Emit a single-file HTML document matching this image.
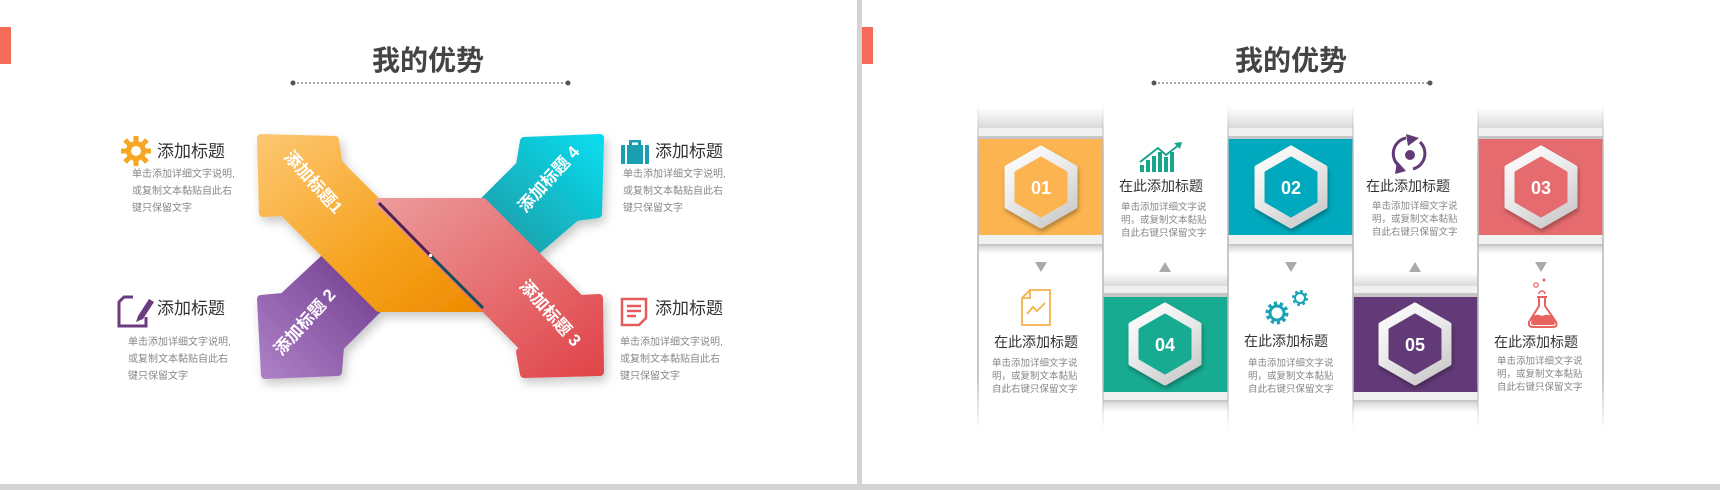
<!DOCTYPE html>
<html><head><meta charset="utf-8">
<style>
html,body{margin:0;padding:0;background:#fff;}
svg{display:block;}
text{font-family:"Liberation Sans","Noto Sans CJK SC",sans-serif;}
</style></head>
<body>
<svg width="1720" height="490" viewBox="0 0 1720 490" xmlns="http://www.w3.org/2000/svg">
<defs>
<linearGradient id="gO" x1="0" y1="0" x2="1" y2="1"><stop offset="0" stop-color="#fdc670"/><stop offset="0.6" stop-color="#f6a21d"/><stop offset="1" stop-color="#ee8c00"/></linearGradient>
<linearGradient id="gP" x1="1" y1="0" x2="0" y2="1"><stop offset="0" stop-color="#6e3a8c"/><stop offset="1" stop-color="#ad80c6"/></linearGradient>
<linearGradient id="gT" x1="0" y1="1" x2="1" y2="0"><stop offset="0" stop-color="#23939e"/><stop offset="1" stop-color="#06dcee"/></linearGradient>
<linearGradient id="gR" x1="0" y1="0" x2="1" y2="1"><stop offset="0" stop-color="#ec9a9a"/><stop offset="1" stop-color="#e04449"/></linearGradient>
<linearGradient id="shT" x1="0" y1="0" x2="0" y2="1"><stop offset="0" stop-color="#fff"/><stop offset="1" stop-color="#dadada"/></linearGradient>
<linearGradient id="shB" x1="0" y1="0" x2="0" y2="1"><stop offset="0" stop-color="#d8d8d8"/><stop offset="1" stop-color="#fff"/></linearGradient>
<linearGradient id="vE" x1="0" y1="0" x2="0" y2="1"><stop offset="0" stop-color="#bbb" stop-opacity="0"/><stop offset="0.15" stop-color="#bbb" stop-opacity="0.8"/><stop offset="0.85" stop-color="#bbb" stop-opacity="0.8"/><stop offset="1" stop-color="#bbb" stop-opacity="0"/></linearGradient>
<linearGradient id="ring" x1="0" y1="0" x2="0.6" y2="1"><stop offset="0" stop-color="#ffffff"/><stop offset="0.5" stop-color="#ececec"/><stop offset="1" stop-color="#cfcfcf"/></linearGradient>
<filter id="ds" x="-30%" y="-30%" width="160%" height="160%"><feDropShadow dx="3" dy="5" stdDeviation="5" flood-color="#000" flood-opacity="0.22"/></filter>
<filter id="ds2" x="-30%" y="-30%" width="160%" height="160%"><feDropShadow dx="1" dy="3" stdDeviation="2" flood-color="#000" flood-opacity="0.3"/></filter>
</defs>

<rect x="0" y="0" width="1720" height="490" fill="#fff"/>
<rect x="857" y="0" width="5" height="490" fill="#d4d4d4"/>
<rect x="0" y="484" width="1720" height="6" fill="#d4d4d4"/>
<rect x="0" y="27" width="11" height="37" fill="#f46b5a"/>
<rect x="862" y="27" width="11" height="37" fill="#f46b5a"/>

<text x="428" y="70" font-size="28" font-weight="bold" fill="#444" text-anchor="middle">我的优势</text>
<line x1="293" y1="83" x2="568" y2="83" stroke="#777" stroke-width="1.2" stroke-dasharray="2,2"/>
<circle cx="293" cy="83" r="2.5" fill="#555"/><circle cx="568" cy="83" r="2.5" fill="#555"/>
<text x="1291" y="70" font-size="28" font-weight="bold" fill="#444" text-anchor="middle">我的优势</text>
<line x1="1154" y1="83" x2="1430" y2="83" stroke="#777" stroke-width="1.2" stroke-dasharray="2,2"/>
<circle cx="1154" cy="83" r="2.5" fill="#555"/><circle cx="1430" cy="83" r="2.5" fill="#555"/>

<g filter="url(#ds)" stroke-linejoin="round">
<polygon points="327,256 379,308 340,347 338,372 265,375 261,299 283,297" fill="url(#gP)" stroke="url(#gP)" stroke-width="8"/>
<polygon points="470,215 520,165 524,141 600,138 598,214 576,217 534,253 490,240" fill="url(#gT)" stroke="url(#gT)" stroke-width="8"/>
<polygon points="261,138 335,140 338,162 345,170 483,308 379,308 283,212 263,213" fill="url(#gO)" stroke="url(#gO)" stroke-width="8"/>
<polygon points="379,202 483,202 575,294 580,299 599,298 600,372 524,374 520,352 525,349" fill="url(#gR)" stroke="url(#gR)" stroke-width="8"/>
</g>
<line x1="379" y1="203" x2="430" y2="255" stroke="#4b2250" stroke-width="3"/>
<line x1="431" y1="256" x2="483" y2="308" stroke="#0f4f55" stroke-width="3"/>
<circle cx="430.5" cy="255.5" r="1.6" fill="#fff"/>
<text transform="translate(309,186) rotate(48)" font-size="17" font-weight="bold" fill="#fff" text-anchor="middle">添加标题1</text>
<text transform="translate(309,326) rotate(-48)" font-size="17" font-weight="bold" fill="#fff" text-anchor="middle">添加标题 2</text>
<text transform="translate(553,183) rotate(-48)" font-size="17" font-weight="bold" fill="#fff" text-anchor="middle">添加标题 4</text>
<text transform="translate(546,317) rotate(48)" font-size="17" font-weight="bold" fill="#fff" text-anchor="middle">添加标题 3</text>

<g fill="#f6a623">
<circle cx="136" cy="151" r="10"/>
<g stroke="#f6a623" stroke-width="5">
<line x1="136" y1="136" x2="136" y2="166"/><line x1="121" y1="151" x2="151" y2="151"/>
<line x1="125" y1="140" x2="147" y2="162"/><line x1="147" y1="140" x2="125" y2="162"/>
</g>
<circle cx="136" cy="151" r="5" fill="#fff"/>
</g>
<text x="157" y="157" font-size="17" fill="#333">添加标题</text>
<g font-size="10" fill="#888"><text x="132" y="177">单击添加详细文字说明,</text><text x="132" y="194">或复制文本黏贴自此右</text><text x="132" y="211">键只保留文字</text></g>

<g fill="none" stroke="#6a3b7e" stroke-width="3">
<path d="M133,297 H124 L119,302 V326 H146 V317"/>
</g>
<path d="M138,316 L149,299 L154,302 L143,319 L136,322 Z" fill="#6a3b7e"/>
<text x="157" y="314" font-size="17" fill="#333">添加标题</text>
<g font-size="10" fill="#888"><text x="128" y="345">单击添加详细文字说明,</text><text x="128" y="362">或复制文本黏贴自此右</text><text x="128" y="379">键只保留文字</text></g>

<g fill="#1a9fb0">
<rect x="621" y="145" width="28" height="19" rx="1"/>
<path d="M629,145 V140 H641 V145 H638 V142.5 H632 V145 Z"/>
</g>
<rect x="625" y="145" width="2" height="19" fill="#fff"/><rect x="643" y="145" width="2" height="19" fill="#fff"/>
<text x="655" y="157" font-size="17" fill="#333">添加标题</text>
<g font-size="10" fill="#888"><text x="623" y="177">单击添加详细文字说明,</text><text x="623" y="194">或复制文本黏贴自此右</text><text x="623" y="211">键只保留文字</text></g>

<g fill="none" stroke="#e85a5a" stroke-width="2.5">
<path d="M622,299 H646 V318 L639,325 H622 Z"/>
<line x1="627" y1="306" x2="641" y2="306"/><line x1="627" y1="311" x2="641" y2="311"/><line x1="627" y1="316" x2="636" y2="316"/>
</g>
<text x="655" y="314" font-size="17" fill="#333">添加标题</text>
<g font-size="10" fill="#888"><text x="620" y="345">单击添加详细文字说明,</text><text x="620" y="362">或复制文本黏贴自此右</text><text x="620" y="379">键只保留文字</text></g>

<rect x="978" y="103" width="625" height="327" fill="#fff"/>
<g>
<rect x="978" y="108" width="125" height="20" fill="url(#shT)"/>
<rect x="978" y="128" width="125" height="8" fill="#f0f0f0"/>
<rect x="978" y="136" width="125" height="3" fill="#c6c6c6"/>
<rect x="978" y="139" width="125" height="96" fill="#fbb44f"/>
<rect x="978" y="235" width="125" height="9" fill="#f0f0f0"/>
<rect x="978" y="244" width="125" height="2" fill="#c8c8c8"/>
<rect x="978" y="246" width="125" height="8" fill="url(#shB)"/>

<rect x="1228" y="108" width="125" height="20" fill="url(#shT)"/>
<rect x="1228" y="128" width="125" height="8" fill="#f0f0f0"/>
<rect x="1228" y="136" width="125" height="3" fill="#c6c6c6"/>
<rect x="1228" y="139" width="125" height="96" fill="#00a9bd"/>
<rect x="1228" y="235" width="125" height="9" fill="#f0f0f0"/>
<rect x="1228" y="244" width="125" height="2" fill="#c8c8c8"/>
<rect x="1228" y="246" width="125" height="8" fill="url(#shB)"/>

<rect x="1478" y="108" width="125" height="20" fill="url(#shT)"/>
<rect x="1478" y="128" width="125" height="8" fill="#f0f0f0"/>
<rect x="1478" y="136" width="125" height="3" fill="#c6c6c6"/>
<rect x="1478" y="139" width="125" height="96" fill="#e66b6e"/>
<rect x="1478" y="235" width="125" height="9" fill="#f0f0f0"/>
<rect x="1478" y="244" width="125" height="2" fill="#c8c8c8"/>
<rect x="1478" y="246" width="125" height="8" fill="url(#shB)"/>
</g>
<g>
<rect x="1103" y="272" width="125" height="14" fill="url(#shT)"/>
<rect x="1103" y="286" width="125" height="7" fill="#f0f0f0"/>
<rect x="1103" y="293" width="125" height="4" fill="#c6c6c6"/>
<rect x="1103" y="297" width="125" height="95" fill="#17ab91"/>
<rect x="1103" y="392" width="125" height="8" fill="#f0f0f0"/>
<rect x="1103" y="400" width="125" height="2" fill="#c8c8c8"/>
<rect x="1103" y="402" width="125" height="10" fill="url(#shB)"/>

<rect x="1353" y="272" width="125" height="14" fill="url(#shT)"/>
<rect x="1353" y="286" width="125" height="7" fill="#f0f0f0"/>
<rect x="1353" y="293" width="125" height="4" fill="#c6c6c6"/>
<rect x="1353" y="297" width="125" height="95" fill="#633a78"/>
<rect x="1353" y="392" width="125" height="8" fill="#f0f0f0"/>
<rect x="1353" y="400" width="125" height="2" fill="#c8c8c8"/>
<rect x="1353" y="402" width="125" height="10" fill="url(#shB)"/>
</g>
<g fill="url(#vE)">
<rect x="977" y="103" width="2" height="327"/>
<rect x="1102" y="103" width="2" height="327"/>
<rect x="1227" y="103" width="2" height="327"/>
<rect x="1352" y="103" width="2" height="327"/>
<rect x="1477" y="103" width="2" height="327"/>
<rect x="1602" y="103" width="2" height="327"/>
</g>

<g stroke-linejoin="round">
<g transform="translate(1041,187)">
<polygon points="0,-39 34,-19.5 34,19.5 0,39 -34,19.5 -34,-19.5" fill="url(#ring)" stroke="url(#ring)" stroke-width="5" filter="url(#ds2)"/>
<polygon points="0,-29 25,-14.5 25,14.5 0,29 -25,14.5 -25,-14.5" fill="#fbb44f" stroke="#fbb44f" stroke-width="3"/>
<text x="0" y="7" font-size="18" font-weight="bold" fill="#fff" text-anchor="middle">01</text></g>
<g transform="translate(1291,187)">
<polygon points="0,-39 34,-19.5 34,19.5 0,39 -34,19.5 -34,-19.5" fill="url(#ring)" stroke="url(#ring)" stroke-width="5" filter="url(#ds2)"/>
<polygon points="0,-29 25,-14.5 25,14.5 0,29 -25,14.5 -25,-14.5" fill="#00a9bd" stroke="#00a9bd" stroke-width="3"/>
<text x="0" y="7" font-size="18" font-weight="bold" fill="#fff" text-anchor="middle">02</text></g>
<g transform="translate(1541,187)">
<polygon points="0,-39 34,-19.5 34,19.5 0,39 -34,19.5 -34,-19.5" fill="url(#ring)" stroke="url(#ring)" stroke-width="5" filter="url(#ds2)"/>
<polygon points="0,-29 25,-14.5 25,14.5 0,29 -25,14.5 -25,-14.5" fill="#e66b6e" stroke="#e66b6e" stroke-width="3"/>
<text x="0" y="7" font-size="18" font-weight="bold" fill="#fff" text-anchor="middle">03</text></g>
<g transform="translate(1165,344)">
<polygon points="0,-39 34,-19.5 34,19.5 0,39 -34,19.5 -34,-19.5" fill="url(#ring)" stroke="url(#ring)" stroke-width="5" filter="url(#ds2)"/>
<polygon points="0,-29 25,-14.5 25,14.5 0,29 -25,14.5 -25,-14.5" fill="#17ab91" stroke="#17ab91" stroke-width="3"/>
<text x="0" y="7" font-size="18" font-weight="bold" fill="#fff" text-anchor="middle">04</text></g>
<g transform="translate(1415,344)">
<polygon points="0,-39 34,-19.5 34,19.5 0,39 -34,19.5 -34,-19.5" fill="url(#ring)" stroke="url(#ring)" stroke-width="5" filter="url(#ds2)"/>
<polygon points="0,-29 25,-14.5 25,14.5 0,29 -25,14.5 -25,-14.5" fill="#633a78" stroke="#633a78" stroke-width="3"/>
<text x="0" y="7" font-size="18" font-weight="bold" fill="#fff" text-anchor="middle">05</text></g>
</g>

<g fill="#aaa">
<polygon points="1035,262 1047,262 1041,272"/>
<polygon points="1159,272 1171,272 1165,262"/>
<polygon points="1285,262 1297,262 1291,272"/>
<polygon points="1409,272 1421,272 1415,262"/>
<polygon points="1535,262 1547,262 1541,272"/>
</g>

<g font-size="14" fill="#333" text-anchor="middle">
<text x="1161" y="191">在此添加标题</text>
<text x="1408" y="191">在此添加标题</text>
<text x="1036" y="347">在此添加标题</text>
<text x="1286" y="346">在此添加标题</text>
<text x="1536" y="347">在此添加标题</text>
</g>
<g font-size="9.5" fill="#888">
<text x="1121" y="210">单击添加详细文字说</text><text x="1121" y="223">明，或复制文本黏贴</text><text x="1121" y="236">自此右键只保留文字</text>
<text x="1372" y="209">单击添加详细文字说</text><text x="1372" y="222">明，或复制文本黏贴</text><text x="1372" y="235">自此右键只保留文字</text>
<text x="992" y="366">单击添加详细文字说</text><text x="992" y="379">明，或复制文本黏贴</text><text x="992" y="392">自此右键只保留文字</text>
<text x="1248" y="366">单击添加详细文字说</text><text x="1248" y="379">明，或复制文本黏贴</text><text x="1248" y="392">自此右键只保留文字</text>
<text x="1497" y="364">单击添加详细文字说</text><text x="1497" y="377">明，或复制文本黏贴</text><text x="1497" y="390">自此右键只保留文字</text>
</g>

<g fill="#17a58c">
<rect x="1140" y="165" width="4" height="7"/><rect x="1146" y="160" width="4" height="12"/><rect x="1152" y="156" width="4" height="16"/><rect x="1158" y="152" width="4" height="20"/><rect x="1164" y="157" width="4" height="15"/><rect x="1170" y="152" width="4" height="20"/>
<polyline points="1140,162 1158,148 1166,155 1180,144" fill="none" stroke="#17a58c" stroke-width="2"/>
<polygon points="1182,142 1174,143 1180,149"/>
</g>
<g>
<path d="M1398,165 A16,16 0 0 1 1406,138" fill="none" stroke="#633a78" stroke-width="3"/>
<path d="M1420,142 A16,16 0 0 1 1413,169" fill="none" stroke="#633a78" stroke-width="3"/>
<polygon points="1406,134 1419,138 1408,146" fill="#633a78"/>
<polygon points="1397,161 1395,174 1406,171" fill="#633a78"/>
<circle cx="1410" cy="155" r="5" fill="#633a78"/>
</g>
<g fill="none" stroke="#f6b04a" stroke-width="1.8">
<path d="M1030,290 H1050 V325 H1022 V298 Z M1022,298 H1030 V290"/>
<polyline points="1027,314 1033,307 1037,311 1045,303"/>
</g>
<g fill="none" stroke="#1aa2b7">
<circle cx="1277" cy="313" r="9" stroke-width="5" stroke-dasharray="3,2.6"/>
<circle cx="1277" cy="313" r="7" stroke-width="3"/>
<circle cx="1300" cy="298" r="6" stroke-width="4" stroke-dasharray="2.4,2.3"/>
<circle cx="1300" cy="298" r="5" stroke-width="2"/>
</g>
<g>
<circle cx="1536" cy="285" r="2.2" fill="none" stroke="#e8625f" stroke-width="1.2"/>
<circle cx="1544" cy="280" r="1.5" fill="#e8625f"/>
<path d="M1539,294 A3,3 0 0 1 1545,294" fill="none" stroke="#e8625f" stroke-width="1.5"/>
<path d="M1537,297 H1547 M1539,297 V306 L1529,322 Q1528,327 1533,327 H1553 Q1558,327 1556,322 L1545,306 V297" fill="none" stroke="#e8625f" stroke-width="2"/>
<path d="M1532,317 Q1537,313 1542,316 Q1547,313 1553,317 L1555,323 Q1555,325 1552,325 H1534 Q1531,325 1531,323 Z" fill="#e8625f"/>
</g>
</svg>
</body></html>
